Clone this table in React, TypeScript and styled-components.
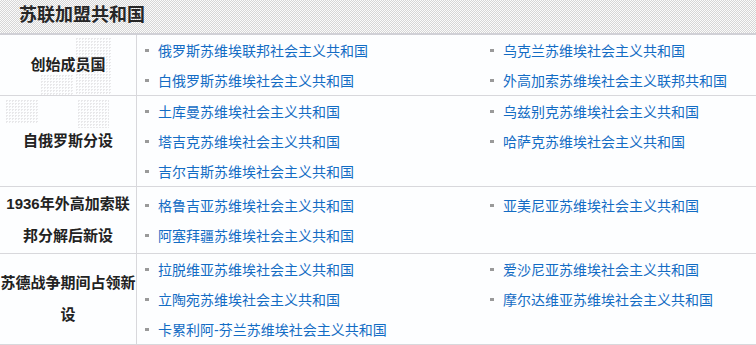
import React from "react";
import styled, { createGlobalStyle, css } from "styled-components";

const GlobalStyle = createGlobalStyle`
  body {
    margin: 0;
    background: #fdfeff;
    font-family: "Liberation Sans", "Noto Sans CJK SC", sans-serif;
  }
`;

const Panel = styled.div`
  width: 756px;
  background: #fdfeff;
`;

const Header = styled.div`
  height: 33px;
  border-bottom: 2px solid #d0d0d6;
  background: repeating-conic-gradient(#d6d6d6 0 25%, #fbfbfb 0 50%);
  background-size: 2px 2px;
`;

const Title = styled.h2`
  margin: 0;
  padding-left: 19px;
  line-height: 30px;
  font-size: 18px;
  font-weight: 700;
  color: #262626;
`;

const Row = styled.div`
  display: flex;
  border-bottom: 1px solid #d8d8dc;
`;

// faint dotted patches behind the first labels
const dots = css`
  content: "";
  position: absolute;
  background: repeating-conic-gradient(#e8e8ea 0 25%, transparent 0 100%);
  background-size: 3px 3px;
  z-index: 0;
`;

const Label = styled.div<{ $decor?: "a" | "b" }>`
  position: relative;
  flex: 0 0 136px;
  display: flex;
  align-items: center;
  justify-content: center;
  padding: 1px 0;
  border-right: 1px solid #d8d8dc;
  text-align: center;
  font-size: 15px;
  line-height: 32px;
  font-weight: 700;
  color: #222;

  span {
    position: relative;
    z-index: 1;
  }

  ${p =>
    p.$decor === "a" &&
    css`
      &::before {
        ${dots};
        left: 75px;
        top: 3px;
        width: 36px;
        height: 57px;
      }
      &::after {
        ${dots};
        left: 40px;
        top: 40px;
        width: 33px;
        height: 20px;
      }
    `}

  ${p =>
    p.$decor === "b" &&
    css`
      &::before {
        ${dots};
        left: 5px;
        top: 4px;
        width: 33px;
        height: 24px;
      }
      &::after {
        ${dots};
        left: 77px;
        top: 4px;
        width: 32px;
        height: 28px;
      }
    `}
`;

const List = styled.ul`
  flex: 1;
  margin: 0;
  padding: 0 0 0 8px;
  list-style: none;
  display: grid;
  grid-template-columns: 345px 1fr;
  align-content: center;
`;

const Item = styled.li`
  display: flex;
  align-items: center;
  height: 30px;
  font-size: 14px;
  color: #136cc4;
  white-space: nowrap;

  &::before {
    content: "";
    width: 4px;
    height: 3px;
    margin-right: 9px;
    background: #9a9a9a;
  }
`;

const groups: { label: string; decor?: "a" | "b"; items: string[] }[] = [
  {
    label: "创始成员国",
    decor: "a",
    items: [
      "俄罗斯苏维埃联邦社会主义共和国",
      "乌克兰苏维埃社会主义共和国",
      "白俄罗斯苏维埃社会主义共和国",
      "外高加索苏维埃社会主义联邦共和国",
    ],
  },
  {
    label: "自俄罗斯分设",
    decor: "b",
    items: [
      "土库曼苏维埃社会主义共和国",
      "乌兹别克苏维埃社会主义共和国",
      "塔吉克苏维埃社会主义共和国",
      "哈萨克苏维埃社会主义共和国",
      "吉尔吉斯苏维埃社会主义共和国",
    ],
  },
  {
    label: "1936年外高加索联邦分解后新设",
    items: [
      "格鲁吉亚苏维埃社会主义共和国",
      "亚美尼亚苏维埃社会主义共和国",
      "阿塞拜疆苏维埃社会主义共和国",
    ],
  },
  {
    label: "苏德战争期间占领新设",
    items: [
      "拉脱维亚苏维埃社会主义共和国",
      "爱沙尼亚苏维埃社会主义共和国",
      "立陶宛苏维埃社会主义共和国",
      "摩尔达维亚苏维埃社会主义共和国",
      "卡累利阿-芬兰苏维埃社会主义共和国",
    ],
  },
];

const App: React.FC = () => {
  return (
    <Panel>
      <GlobalStyle />
      <Header>
        <Title>苏联加盟共和国</Title>
      </Header>
      {groups.map(g => (
        <Row key={g.label}>
          <Label $decor={g.decor}>
            <span>{g.label}</span>
          </Label>
          <List>
            {g.items.map(name => (
              <Item key={name}>{name}</Item>
            ))}
          </List>
        </Row>
      ))}
    </Panel>
  );
};

export default App;
